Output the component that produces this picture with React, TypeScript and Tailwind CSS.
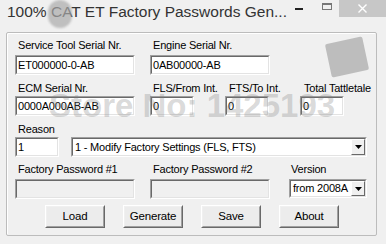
import React from 'react';

const font = { fontFamily: '"Liberation Sans", Arial, sans-serif' };

function Sunken({ className = '', bg = 'bg-white', children }: { className?: string; bg?: string; children?: React.ReactNode }) {
  return (
    <div className={`border border-t-[#a0a0a0] border-l-[#a0a0a0] border-b-white border-r-white ${className}`}>
      <div className={`h-full border border-t-[#696969] border-l-[#696969] border-b-[#e3e3e3] border-r-[#e3e3e3] ${bg} flex items-center pl-[1px] text-[11px] tracking-[-0.2px] text-black`}>
        {children}
      </div>
    </div>
  );
}

function Arrow() {
  return (
    <div className="h-full w-[14px] border border-t-white border-l-white border-b-[#696969] border-r-[#696969] bg-[#f0f0f0] flex items-center justify-center">
      <svg width="7" height="4" viewBox="0 0 7 4">
        <path d="M0 0h7L3.5 4z" fill="#000" />
      </svg>
    </div>
  );
}

function Combo({ className = '', text }: { className?: string; text: string }) {
  return (
    <div className={`border border-t-[#a0a0a0] border-l-[#a0a0a0] border-b-white border-r-white ${className}`}>
      <div className="h-full border border-t-[#696969] border-l-[#696969] border-b-[#e3e3e3] border-r-[#e3e3e3] bg-white flex items-center">
        <span className="flex-1 pl-[2px] text-[11px] tracking-[-0.2px] whitespace-nowrap">{text}</span>
        <div className="h-full py-[0px]">
          <Arrow />
        </div>
      </div>
    </div>
  );
}

function Field({ label, value = '', w, bg }: { label: string; value?: string; w: string; bg?: string }) {
  return (
    <div className={`flex flex-col ${w}`}>
      <span className="pl-[3px] h-[13px] leading-[13px] text-[11px] tracking-[-0.2px] whitespace-nowrap">{label}</span>
    </div>
  );
}

function Button({ label }: { label: string }) {
  return (
    <div className="w-[60px] h-[23px] border border-t-white border-l-white border-b-[#696969] border-r-[#696969]">
      <div className="h-full border border-t-[#f0f0f0] border-l-[#f0f0f0] border-b-[#a0a0a0] border-r-[#a0a0a0] bg-[#ececec] flex items-center justify-center text-[11.5px] tracking-[-0.2px]">
        {label}
      </div>
    </div>
  );
}

export default function App() {
  return (
    <div className="relative w-[386px] h-[244px] bg-[#f0f0f0] overflow-hidden text-black" style={font}>
      {/* title bar */}
      <div className="h-[32px] flex items-start">
        <span className="pl-[7px] pt-[1px] text-[15.5px] leading-[22px] text-[#333] whitespace-nowrap">
          100% CAT ET Factory Passwords Gen...
        </span>
        <div className="ml-auto flex items-start">
          <div className="w-[8px] h-[2px] bg-[#222] mt-[8px] mr-[19px]" />
          <div className="w-[10px] h-[7px] border border-[#777] border-t-2 mt-[3px] mr-[7px]" />
          <div className="w-[47px] h-[17px] bg-[#c7c7c7] flex items-center justify-center">
            <svg width="9" height="9" viewBox="0 0 9 9">
              <path d="M0.5 0.5l8 8M8.5 0.5l-8 8" stroke="#fff" strokeWidth="1.4" />
            </svg>
          </div>
        </div>
      </div>

      {/* group box */}
      <div className="ml-[6px] mr-[9px] h-[204px] border border-[#bcbcbc] rounded-[2px] shadow-[inset_1px_1px_0_#fff] pl-[8px] pt-[6px] flex flex-col">
        {/* row 1 */}
        <div className="flex gap-[15px]">
          <div className="flex flex-col w-[120px]">
            <span className="pl-[3px] h-[13px] leading-[13px] text-[11px] tracking-[-0.2px] whitespace-nowrap">Service Tool Serial Nr.</span>
            <Sunken className="mt-[3px] h-[20px]">ET000000-0-AB</Sunken>
          </div>
          <div className="flex flex-col w-[120px]">
            <span className="pl-[3px] h-[13px] leading-[13px] text-[11px] tracking-[-0.2px] whitespace-nowrap">Engine Serial Nr.</span>
            <Sunken className="mt-[3px] h-[20px]">0AB00000-AB</Sunken>
          </div>
        </div>

        {/* row 2 */}
        <div className="flex mt-[7px]">
          <div className="flex flex-col w-[120px]">
            <span className="pl-[3px] h-[13px] leading-[13px] text-[11px] tracking-[-0.2px] whitespace-nowrap">ECM Serial Nr.</span>
            <Sunken className="mt-[1px] h-[20px]">0000A000AB-AB</Sunken>
          </div>
          <div className="flex flex-col w-[44px] ml-[15px]">
            <span className="pl-[3px] h-[13px] leading-[13px] text-[11px] tracking-[-0.2px] whitespace-nowrap">FLS/From Int.</span>
            <Sunken className="mt-[1px] h-[20px]">0</Sunken>
          </div>
          <div className="flex flex-col w-[44px] ml-[31px]">
            <span className="pl-[4px] h-[13px] leading-[13px] text-[11px] tracking-[-0.2px] whitespace-nowrap">FTS/To Int.</span>
            <Sunken className="mt-[1px] h-[20px]">0</Sunken>
          </div>
          <div className="flex flex-col w-[44px] ml-[31px]">
            <span className="pl-[4px] h-[13px] leading-[13px] text-[11px] tracking-[-0.2px] whitespace-nowrap">Total Tattletale</span>
            <Sunken className="mt-[1px] h-[20px]">0</Sunken>
          </div>
        </div>

        {/* row 3 */}
        <div className="flex mt-[7px] items-end">
          <div className="flex flex-col w-[44px]">
            <span className="pl-[3px] h-[13px] leading-[13px] text-[11px] tracking-[-0.2px] whitespace-nowrap">Reason</span>
            <Sunken className="mt-[1px] h-[20px]">1</Sunken>
          </div>
          <Combo className="ml-[12px] w-[296px] h-[20px]" text="1 - Modify Factory Settings (FLS, FTS)" />
        </div>

        {/* row 4 */}
        <div className="flex mt-[6px]">
          <div className="flex flex-col w-[120px]">
            <span className="pl-[3px] h-[13px] leading-[13px] text-[11px] tracking-[-0.2px] whitespace-nowrap">Factory Password #1</span>
            <Sunken className="mt-[3px] h-[20px]" bg="bg-[#f0f0f0]" />
          </div>
          <div className="flex flex-col w-[120px] ml-[15px]">
            <span className="pl-[3px] h-[13px] leading-[13px] text-[11px] tracking-[-0.2px] whitespace-nowrap">Factory Password #2</span>
            <Sunken className="mt-[3px] h-[20px]" bg="bg-[#f0f0f0]" />
          </div>
          <div className="flex flex-col w-[78px] ml-[19px]">
            <span className="pl-[2px] h-[13px] leading-[13px] text-[11px] tracking-[-0.2px] whitespace-nowrap">Version</span>
            <Combo className="mt-[3px] h-[19px]" text="from 2008A" />
          </div>
        </div>

        {/* buttons */}
        <div className="flex gap-[18px] ml-[30px] mt-[6px]">
          <Button label="Load" />
          <Button label="Generate" />
          <Button label="Save" />
          <Button label="About" />
        </div>
      </div>

      {/* watermark overlays */}
      <div className="absolute left-[48px] top-[0px] w-[24px] h-[28px] rounded-full bg-[#a9a9a9]/70 blur-[1px]" />
      <div className="absolute left-[328px] top-[40px] w-[38px] h-[34px] bg-[#b4b4b4]/85 rotate-[-12deg] rounded-[2px]" />
      <div className="absolute left-[49px] top-[88px] text-[33px] font-bold leading-[36px] text-[#808080]/30 whitespace-nowrap pointer-events-none">
        Store No: 1425193
      </div>
    </div>
  );
}
